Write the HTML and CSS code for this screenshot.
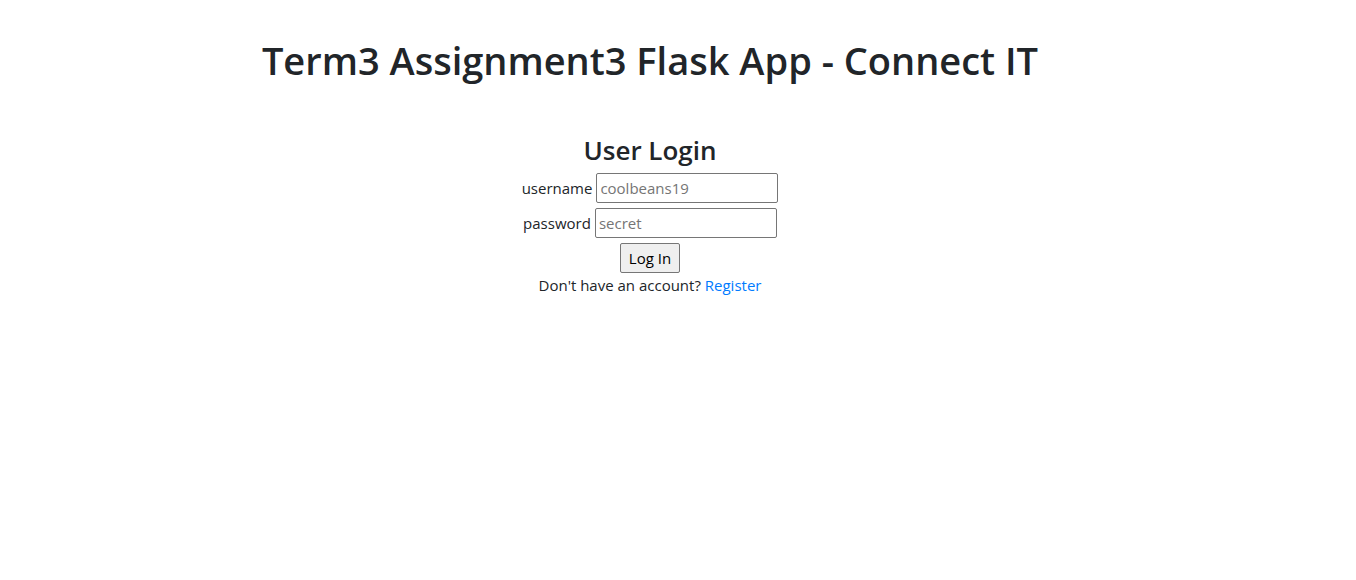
FILE: index.html
```html
<!DOCTYPE html>
<html lang="en">
<head>
<meta charset="utf-8">
<title>Connect IT</title>
<link rel="stylesheet" href="styles.css">
</head>
<body>
<div class="page">
  <h1 class="title">Term3 Assignment3 Flask App - Connect IT</h1>
  <div class="login">
    <h3 class="login-title">User Login</h3>
    <form class="login-form">
      <div class="row"><label class="label" for="u">username</label> <input class="field" id="u" type="text" placeholder="coolbeans19"></div>
      <div class="row"><label class="label" for="p">password</label> <input class="field" id="p" type="password" placeholder="secret"></div>
      <div class="row"><button class="btn" type="button">Log In</button></div>
      <p class="note">Don't have an account? <a class="link" href="#">Register</a></p>
    </form>
  </div>
</div>
</body>
</html>
```
FILE: styles.css
```css
html, body {
  margin: 0;
  padding: 0;
  background: #fff;
}
body {
  font-family: "Open Sans", "Noto Sans", sans-serif;
  font-size: 15px;
  color: #212529;
}
.page {
  width: 1300px;
  text-align: center;
  padding-top: 36px;
}
.title {
  margin: 0;
  font-size: 38px;
  font-weight: 600;
  line-height: 48px;
  letter-spacing: 0;
}
.login {
  margin-top: 49px;
}
.login-title {
  margin: 0 0 6px;
  font-size: 26px;
  font-weight: 600;
  line-height: 34px;
}
.login-form {
  margin: 0;
}
.row {
  display: flex;
  justify-content: center;
  align-items: center;
  gap: 4px;
  margin-bottom: 5px;
}
.label {
  font-size: 15px;
}
.field {
  box-sizing: border-box;
  width: 182px;
  height: 30px;
  border: 1px solid #767676;
  border-radius: 2px;
  padding: 1px 3px;
  font-family: inherit;
  font-size: 15px;
  color: #212529;
}
.field::placeholder {
  color: #757575;
}
.btn {
  box-sizing: border-box;
  width: 60px;
  height: 30px;
  background: #efefef;
  border: 1px solid #767676;
  border-radius: 2px;
  font-family: inherit;
  font-size: 15px;
  color: #000;
  padding: 0;
}
.note {
  margin: -3px 0 0;
  line-height: 20px;
}
.link {
  color: #007bff;
  text-decoration: none;
}
```
